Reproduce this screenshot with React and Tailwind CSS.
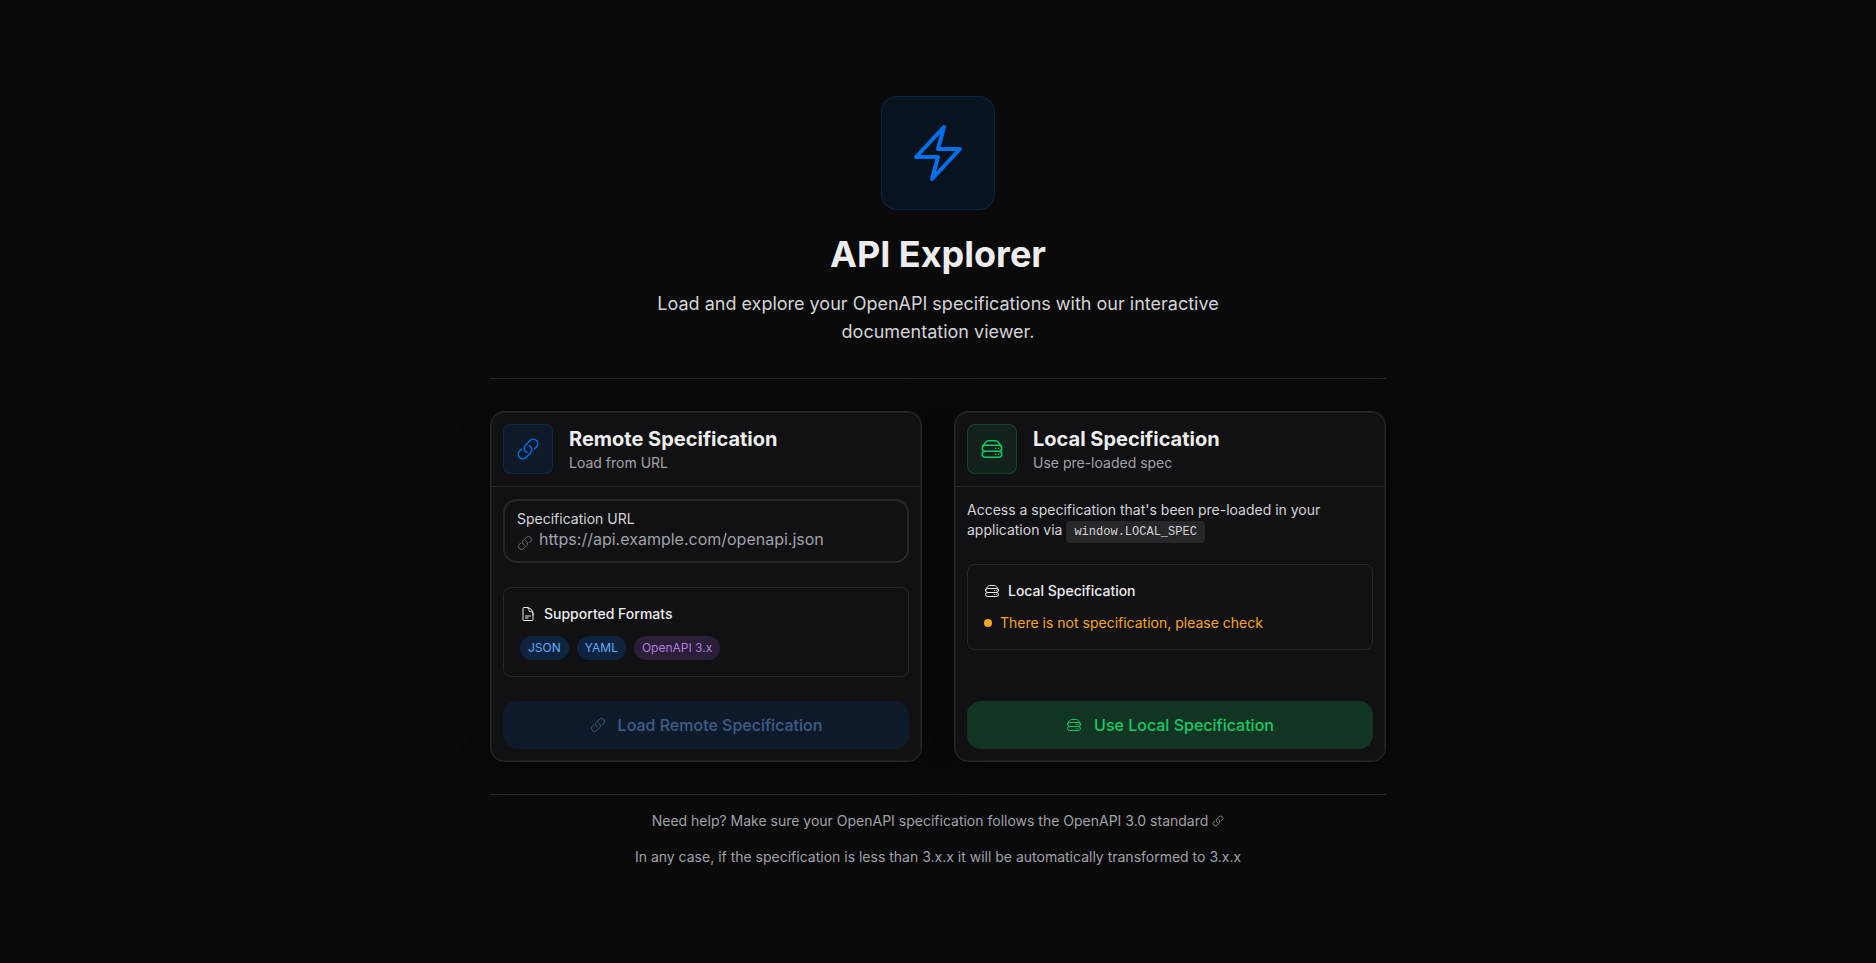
import { useState } from "react";
import {
  HiOutlineBolt,
  HiOutlineLink,
  HiOutlineServerStack,
  HiOutlineDocumentText,
} from "react-icons/hi2";

function Card({ icon, tone, title, subtitle, children }) {
  return (
    <section className="flex flex-col rounded-[14px] border border-[#27272a] bg-[#111113] shadow-[0_0_30px_0_rgb(0_0_0/0.07),0_2px_30px_0_rgb(0_0_0/0.26),inset_0_0_1px_1px_rgb(255_255_255/0.06)]">
      <header className="flex items-center gap-4 border-b border-[#27272a] p-3">
        <div className={`rounded-lg border p-3 ${tone}`}>{icon}</div>
        <div>
          <h2 className="text-xl font-bold text-[#ededed]">{title}</h2>
          <p className="text-sm text-[#a1a1aa]">{subtitle}</p>
        </div>
      </header>
      <div className="flex grow flex-col gap-6 p-3">{children}</div>
    </section>
  );
}

function Panel({ icon, title, children }) {
  return (
    <div className="flex flex-col gap-3 rounded-lg border border-[#27272a] p-4">
      <h3 className="flex items-center gap-2 text-sm font-medium text-[#ededed]">
        {icon}
        {title}
      </h3>
      {children}
    </div>
  );
}

const formats = [
  { name: "JSON", tone: "bg-[#006fee]/20 text-[#66aaf9]" },
  { name: "YAML", tone: "bg-[#006fee]/20 text-[#66aaf9]" },
  { name: "OpenAPI 3.x", tone: "bg-[#9353d3]/20 text-[#ae7ede]" },
];

export default function App() {
  const [url, setUrl] = useState("");

  return (
    <main className="flex min-h-screen flex-col items-center justify-center bg-[#0a0a0a] px-6 py-24 font-['Inter',sans-serif] text-[#ededed] antialiased">
      <div className="flex w-full max-w-4xl flex-col">
        <header className="flex flex-col items-center text-center">
          <div className="mb-6 rounded-2xl border border-[#006fee]/20 bg-[#006fee]/10 p-6 text-[#006fee]">
            <HiOutlineBolt className="size-16" />
          </div>
          <h1 className="mb-4 text-4xl font-bold">API Explorer</h1>
          <p className="max-w-xl text-lg/7 text-[#d4d4d8]">
            Load and explore your OpenAPI specifications with our interactive
            documentation viewer.
          </p>
        </header>

        <hr className="my-8 border-[#27272a]" />

        <div className="grid gap-8 md:grid-cols-2">
          <Card
            icon={<HiOutlineLink className="size-6" />}
            tone="border-[#006fee]/20 bg-[#006fee]/10 text-[#006fee]"
            title="Remote Specification"
            subtitle="Load from URL"
          >
            <div className="flex h-16 flex-col rounded-[14px] border-2 border-[#27272a] px-3 pt-2">
              <label htmlFor="spec-url" className="text-sm/5 text-[#d4d4d8]">
                Specification URL
              </label>
              <div className="flex items-start gap-1.5">
                <HiOutlineLink className="mt-1.5 size-4 shrink-0 text-[#71717a]" />
                <input
                  id="spec-url"
                  type="url"
                  value={url}
                  onChange={(e) => setUrl(e.target.value)}
                  placeholder="https://api.example.com/openapi.json"
                  className="h-5 w-full bg-transparent text-base/5 outline-none placeholder:text-[#a1a1aa]"
                />
              </div>
            </div>
            <Panel
              icon={<HiOutlineDocumentText className="size-4" />}
              title="Supported Formats"
            >
              <ul className="flex gap-2">
                {formats.map((f) => (
                  <li
                    key={f.name}
                    className={`rounded-full px-2 py-1 text-xs ${f.tone}`}
                  >
                    {f.name}
                  </li>
                ))}
              </ul>
            </Panel>
            <button
              type="button"
              disabled
              className="mt-auto flex h-12 items-center justify-center gap-3 rounded-[14px] bg-[#006fee]/20 text-base font-medium text-[#66aaf9] opacity-50"
            >
              <HiOutlineLink className="size-4" />
              Load Remote Specification
            </button>
          </Card>

          <Card
            icon={<HiOutlineServerStack className="size-6" />}
            tone="border-[#17c964]/20 bg-[#17c964]/10 text-[#17c964]"
            title="Local Specification"
            subtitle="Use pre-loaded spec"
          >
            <p className="pt-px text-sm text-[#d4d4d8]">
              Access a specification that's been pre-loaded in your application
              via{" "}
              <code className="rounded-sm bg-[#27272a] px-2 py-1 font-['Liberation_Mono',monospace] text-xs">
                window.LOCAL_SPEC
              </code>
            </p>
            <Panel
              icon={<HiOutlineServerStack className="size-4" />}
              title="Local Specification"
            >
              <p className="flex items-center gap-2 text-sm text-[#f5a524]">
                <span className="size-2 rounded-full bg-[#f5a524]" />
                There is not specification, please check
              </p>
            </Panel>
            <button
              type="button"
              className="mt-auto flex h-12 items-center justify-center gap-3 rounded-[14px] bg-[#17c964]/20 text-base font-medium text-[#17c964]"
            >
              <HiOutlineServerStack className="size-4" />
              Use Local Specification
            </button>
          </Card>
        </div>

        <hr className="mt-8 mb-4 border-[#27272a]" />

        <footer className="flex flex-col gap-4 text-center text-sm text-[#a1a1aa]">
          <p>
            Need help? Make sure your OpenAPI specification follows the{" "}
            <a
              href="https://spec.openapis.org/oas/v3.0.0"
              className="inline-flex items-center gap-1"
            >
              OpenAPI 3.0 standard
              <HiOutlineLink className="size-3" />
            </a>
          </p>
          <p>
            In any case, if the specification is less than 3.x.x it will be
            automatically transformed to 3.x.x
          </p>
        </footer>
      </div>
    </main>
  );
}
